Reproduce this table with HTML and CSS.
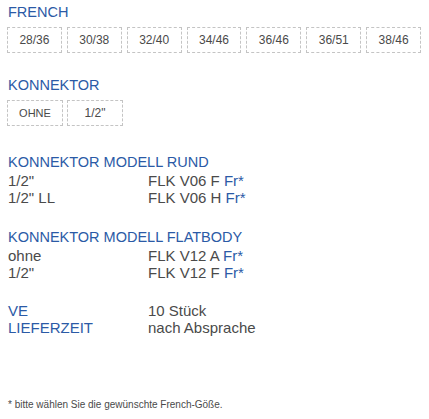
FILE: index.html
```html
<!DOCTYPE html>
<html lang="de">
<head>
<meta charset="utf-8">
<link rel="stylesheet" href="styles.css">
</head>
<body>
<div class="page">
  <section class="group">
    <h2 class="title">FRENCH</h2>
    <div class="chips">
      <span class="chip">28/36</span>
      <span class="chip">30/38</span>
      <span class="chip">32/40</span>
      <span class="chip">34/46</span>
      <span class="chip">36/46</span>
      <span class="chip">36/51</span>
      <span class="chip">38/46</span>
    </div>
  </section>

  <section class="group konn">
    <h2 class="title">KONNEKTOR</h2>
    <div class="chips wide">
      <span class="chip small">OHNE</span>
      <span class="chip">1/2"</span>
    </div>
  </section>

  <section class="group spec first">
    <h2 class="title">KONNEKTOR MODELL RUND</h2>
    <div class="row"><span class="k">1/2"</span><span class="v">FLK V06 F <em>Fr*</em></span></div>
    <div class="row"><span class="k">1/2" LL</span><span class="v">FLK V06 H <em>Fr*</em></span></div>
  </section>

  <section class="group spec">
    <h2 class="title">KONNEKTOR MODELL FLATBODY</h2>
    <div class="row"><span class="k">ohne</span><span class="v">FLK V12 A <em>Fr*</em></span></div>
    <div class="row"><span class="k">1/2"</span><span class="v">FLK V12 F <em>Fr*</em></span></div>
  </section>

  <section class="group spec last">
    <div class="row"><span class="k blue">VE</span><span class="v">10 Stück</span></div>
    <div class="row"><span class="k blue">LIEFERZEIT</span><span class="v">nach Absprache</span></div>
  </section>

  <p class="note">* bitte wählen Sie die gewünschte French-Göße.</p>
</div>
</body>
</html>
```

FILE: styles.css
```css
html, body {
  margin: 0;
  padding: 0;
  background: #ffffff;
}
body {
  font-family: "Liberation Sans", Arial, sans-serif;
  color: #4a4a4a;
}
.page {
  padding: 3px 8px 0 8px;
}
.title {
  margin: 0;
  font-size: 14.5px;
  font-weight: normal;
  line-height: 18px;
  color: #2b5aa6;
}
.chips {
  display: flex;
  gap: 5px;
  margin-top: 6px;
  margin-left: -1px;
}
.chip {
  box-sizing: border-box;
  width: 55px;
  height: 26px;
  border: 1px dashed #c4c4c4;
  display: flex;
  align-items: center;
  justify-content: center;
  font-size: 12px;
  color: #4a4a4a;
}
.chips.wide {
  gap: 4px;
}
.chips.wide .chip {
  width: 56px;
}
.chip.small {
  font-size: 11px;
}
.konn {
  margin-top: 23px;
}
.spec {
  margin-top: 22px;
}
.spec.first {
  margin-top: 27px;
}
.spec.last {
  margin-top: 21px;
}
.spec .title {
  margin-bottom: 1px;
}
.row {
  display: flex;
  font-size: 15px;
  line-height: 17px;
}
.k {
  width: 140px;
}
.k.blue {
  color: #2b5aa6;
}
.v em {
  font-style: normal;
  color: #2b5aa6;
}
.note {
  margin: 63px 0 0 0;
  font-size: 10px;
  line-height: 12px;
  color: #4a4a4a;
}
```
